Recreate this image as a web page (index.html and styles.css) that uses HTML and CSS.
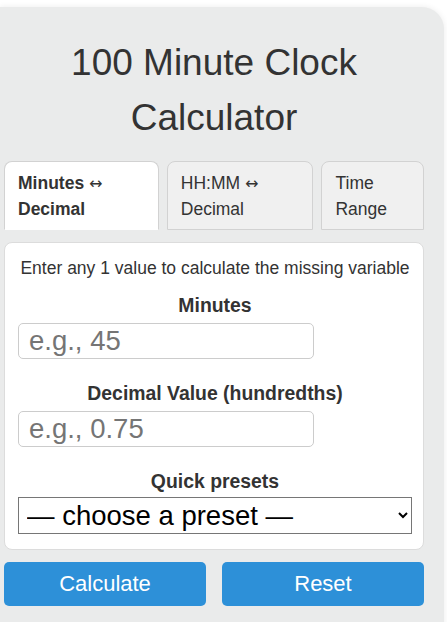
FILE: index.html
```html
<!DOCTYPE html>
<html lang="en">
<head>
    <meta charset="UTF-8">
    <meta name="viewport" content="width=device-width, initial-scale=1.0">
    <title>100 Minute Clock Calculator</title>
    <link rel="stylesheet" href="styles.css">
</head>
<body>
    <div class="calculator">
        <h1>100 Minute Clock Calculator</h1>

        <div class="tabs">
            <button type="button" class="tab active">Minutes <span class="arrow">&harr;</span> Decimal</button>
            <button type="button" class="tab">HH:MM <span class="arrow">&harr;</span> Decimal</button>
            <button type="button" class="tab">Time Range</button>
        </div>

        <form class="panel" id="minutesForm">
            <p class="intro">Enter any 1 value to calculate the missing variable</p>

            <div class="field">
                <label for="minutes">Minutes</label>
                <input type="text" id="minutes" name="minutes" placeholder="e.g., 45">
            </div>

            <div class="field">
                <label for="decimal">Decimal Value (hundredths)</label>
                <input type="text" id="decimal" name="decimal" placeholder="e.g., 0.75">
            </div>

            <div class="field">
                <label for="preset">Quick presets</label>
                <select id="preset" name="preset">
                    <option value="">&mdash; choose a preset &mdash;</option>
                    <option value="15">15 minutes</option>
                    <option value="30">30 minutes</option>
                    <option value="45">45 minutes</option>
                </select>
            </div>
        </form>

        <div class="actions">
            <button type="button" class="btn">Calculate</button>
            <button type="button" class="btn">Reset</button>
        </div>
    </div>
</body>
</html>
```

FILE: styles.css
```css
body {
    margin: 0;
    background-color: #fff;
    font-family: "Liberation Sans", Arial, sans-serif;
    color: #333;
}

.calculator {
    width: 420px;
    margin-top: 7px;
    padding: 0 20px 40px 4px;
    background-color: #eaebeb;
    border-radius: 0 22px 22px 0;
    box-shadow: 0 0 6px rgba(0, 0, 0, 0.08);
}

h1 {
    margin: 0;
    padding-top: 28px;
    font-size: 37px;
    font-weight: normal;
    line-height: 55px;
    text-align: center;
}

.tabs {
    display: grid;
    grid-template-columns: 154fr 146fr 102fr;
    column-gap: 8px;
    margin-top: 16px;
}

.tab {
    padding: 8px 13px 7px;
    border: 1px solid #d2d2d2;
    border-radius: 8px 8px 0 0;
    background-color: #f0f0f0;
    font-family: inherit;
    font-size: 17.5px;
    line-height: 26px;
    color: #333;
    text-align: left;
    cursor: pointer;
}

    .tab.active {
        background-color: #fff;
        border-bottom-color: #fff;
        font-weight: bold;
    }

.arrow {
    font-family: "DejaVu Sans", sans-serif;
    font-weight: normal;
    font-size: 16px;
    line-height: 1;
}

.panel {
    margin-top: 12px;
    padding: 12px 11px 15px 13px;
    background-color: #fff;
    border: 1px solid #dcdcdc;
    border-radius: 8px;
    text-align: center;
}

.intro {
    margin: 0 0 11px;
    font-size: 17.5px;
    line-height: 26px;
}

.field + .field {
    margin-top: 21px;
}

label {
    display: block;
    margin-bottom: 5px;
    font-size: 19.4px;
    font-weight: bold;
    line-height: 26px;
}

input[type="text"] {
    display: block;
    width: 75%;
    height: 36px;
    padding: 0 10px;
    box-sizing: border-box;
    border: 1px solid #ccc;
    border-radius: 5px;
    font-family: inherit;
    font-size: 27.5px;
    color: #333;
}

    input[type="text"]::placeholder {
        color: #757575;
    }

select {
    display: block;
    width: 100%;
    height: 37px;
    margin-top: -2px;
    padding: 0 2px 0 4px;
    border: 1px solid #767676;
    border-radius: 0;
    background-color: #fff;
    font-family: inherit;
    font-size: 27.5px;
    color: #000;
}

.actions {
    display: flex;
    gap: 16px;
    margin-top: 12px;
}

.btn {
    flex: 1;
    height: 44px;
    background-color: #2d90d8;
    border: none;
    border-radius: 5px;
    font-family: inherit;
    font-size: 22px;
    color: #fff;
    cursor: pointer;
}

    .btn:hover {
        background-color: #1f7bbf;
    }
```
